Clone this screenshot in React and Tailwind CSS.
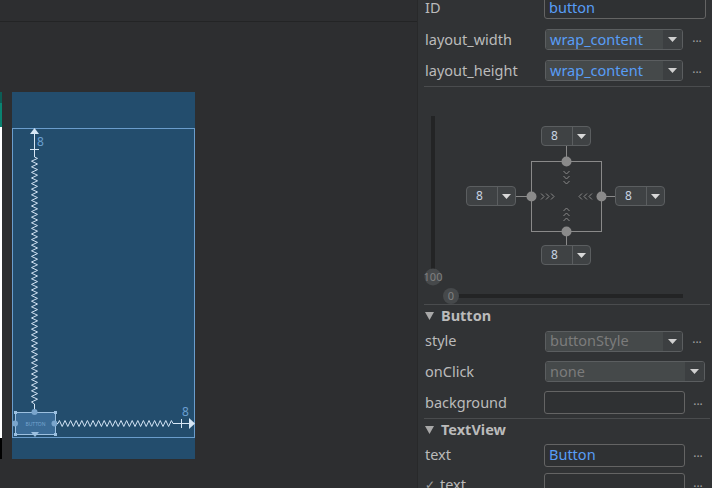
import React from "react";

const zigV = (x, y0, y1, a, step) => {
  let d = `M${x} ${y0}`;
  let s = 1;
  for (let y = y0 + step / 2; y < y1; y += step) {
    d += ` L${x + s * a} ${y}`;
    s = -s;
  }
  d += ` L${x} ${y1}`;
  return d;
};
const zigH = (y, x0, x1, a, step) => {
  let d = `M${x0} ${y}`;
  let s = -1;
  for (let x = x0 + step / 2; x < x1; x += step) {
    d += ` L${x} ${y + s * a}`;
    s = -s;
  }
  d += ` L${x1} ${y}`;
  return d;
};

function Blueprint() {
  return (
    <div className="w-[183px] h-[367px] bg-[#234d6d] shrink-0">
      <svg width="183" height="367" viewBox="0 0 183 367">
        <rect x="0.5" y="36.5" width="182" height="309" fill="none" stroke="#6a9dcc" strokeWidth="1" />
        <polygon points="22.5,36 18,42 27,42" fill="#d6e6f5" />
        <line x1="22.5" y1="42" x2="22.5" y2="65" stroke="#d6e6f5" strokeWidth="1" />
        <line x1="18" y1="57.5" x2="27" y2="57.5" stroke="#d6e6f5" strokeWidth="1" />
        <text x="25" y="54" fontSize="12" fill="#6a9fd0" fontFamily="Noto Sans, sans-serif">8</text>
        <path d={zigV(22.5, 65, 312, 3, 2.8)} fill="none" stroke="#d2e3f4" strokeWidth="1" />
        <line x1="22.5" y1="312" x2="22.5" y2="319" stroke="#d6e6f5" strokeWidth="1" />
        <path d={zigH(331.5, 46, 161, 3, 2.8)} fill="none" stroke="#d2e3f4" strokeWidth="1" />
        <line x1="161" y1="331.5" x2="177" y2="331.5" stroke="#d6e6f5" strokeWidth="1" />
        <line x1="169.5" y1="327" x2="169.5" y2="336" stroke="#d6e6f5" strokeWidth="1" />
        <polygon points="183,331.5 177,326 177,337" fill="#d6e6f5" />
        <text x="170" y="324" fontSize="12" fill="#6a9fd0" fontFamily="Noto Sans, sans-serif">8</text>
        <rect x="3.5" y="320.5" width="40" height="22" fill="#3a6b96" stroke="#9cc0e0" strokeWidth="1" />
        <text x="23.5" y="334" fontSize="5" fill="#76a5d0" textAnchor="middle" fontFamily="Noto Sans, sans-serif">BUTTON</text>
        <rect x="2" y="319" width="3" height="3" fill="#9cc0e0" />
        <rect x="42" y="319" width="3" height="3" fill="#9cc0e0" />
        <rect x="2" y="341" width="3" height="3" fill="#9cc0e0" />
        <rect x="42" y="341" width="3" height="3" fill="#9cc0e0" />
        <circle cx="22.5" cy="320" r="3" fill="#7aa5cc" />
        <circle cx="42.5" cy="331.5" r="3" fill="#7aa5cc" />
        <circle cx="3" cy="331.5" r="3" fill="#7aa5cc" />
        <polygon points="19,340 27,340 23,345" fill="#9cc0e0" />
        <line x1="45" y1="331.5" x2="46" y2="331.5" stroke="#d6e6f5" />
      </svg>
    </div>
  );
}

function Drop8({ className }) {
  return (
    <div className={"absolute w-[50px] h-[20px] rounded-[4px] border border-[#5b5e60] bg-[#3f4244] flex " + className}>
      <div className="w-[30px] flex items-center pl-[9px] text-[12px] text-[#c8d4e2] leading-none">8</div>
      <div className="flex-1 border-l border-[#5b5e60] flex items-center justify-center">
        <svg width="9" height="5" viewBox="0 0 9 5"><polygon points="0,0 9,0 4.5,5" fill="#d8d8d8" /></svg>
      </div>
    </div>
  );
}

function Chev({ x, y, dir }) {
  const c = "#8a8a8a";
  const items = [0, 1, 2];
  return items.map((i) => {
    let pts;
    if (dir === "r") pts = `${x + i * 5},${y - 3} ${x + i * 5 + 3},${y} ${x + i * 5},${y + 3}`;
    if (dir === "l") pts = `${x - i * 5},${y - 3} ${x - i * 5 - 3},${y} ${x - i * 5},${y + 3}`;
    if (dir === "d") pts = `${x - 3},${y + i * 5} ${x},${y + i * 5 + 3} ${x + 3},${y + i * 5}`;
    if (dir === "u") pts = `${x - 3},${y - i * 5} ${x},${y - i * 5 - 3} ${x + 3},${y - i * 5}`;
    return <polyline key={i} points={pts} fill="none" stroke={c} strokeWidth="1" />;
  });
}

function ConstraintWidget() {
  return (
    <div className="relative h-[217px] w-full">
      <svg className="absolute inset-0" width="293" height="217" viewBox="0 0 293 217">
        <rect x="13" y="29" width="4" height="160" fill="#232425" />
        <rect x="33" y="207" width="232" height="4" fill="#232425" />
        <line x1="148.5" y1="59" x2="148.5" y2="74" stroke="#8a8a8a" />
        <line x1="148.5" y1="144" x2="148.5" y2="158" stroke="#8a8a8a" />
        <line x1="98" y1="109.5" x2="113" y2="109.5" stroke="#8a8a8a" />
        <line x1="183" y1="109.5" x2="197" y2="109.5" stroke="#8a8a8a" />
        <rect x="113.5" y="74.5" width="70" height="70" fill="none" stroke="#8a8a8a" />
        <circle cx="148.5" cy="74.5" r="5" fill="#8a8a8a" />
        <circle cx="148.5" cy="144.5" r="5" fill="#8a8a8a" />
        <circle cx="113.5" cy="109.5" r="5" fill="#8a8a8a" />
        <circle cx="183.5" cy="109.5" r="5" fill="#8a8a8a" />
        <Chev x={123} y={109.5} dir="r" />
        <Chev x={174} y={109.5} dir="l" />
        <Chev x={148.5} y={84} dir="d" />
        <Chev x={148.5} y={134} dir="u" />
        <circle cx="15" cy="190" r="8.5" fill="#46494b" />
        <circle cx="33" cy="209" r="8" fill="#46494b" />
        <text x="15" y="194" fontSize="11" fill="#808080" textAnchor="middle" fontFamily="Noto Sans, sans-serif">100</text>
        <text x="33" y="213" fontSize="11" fill="#808080" textAnchor="middle" fontFamily="Noto Sans, sans-serif">0</text>
      </svg>
      <Drop8 className="left-[123px] top-[39px]" />
      <Drop8 className="left-[48px] top-[99px]" />
      <Drop8 className="left-[197px] top-[99px]" />
      <Drop8 className="left-[123px] top-[158px]" />
    </div>
  );
}

const Dots = () => <div className="w-[26px] shrink-0 text-center text-[#a0a0a0] text-[12px] leading-none -mt-[4px]">...</div>;

function Dropdown({ value, w, disabled }) {
  return (
    <div className={"ml-[1px] h-[21px] shrink-0 rounded-[3px] border border-[#5b5e60] flex overflow-hidden " + w}>
      <div className={"flex-1 bg-[#45494a] flex items-center pl-[4px] text-[14.5px] " + (disabled ? "text-[#7c7c7c]" : "text-[#589df6]")}>{value}</div>
      <div className="w-[19px] bg-[#3c3f41] flex items-center justify-center">
        <svg width="9" height="5" viewBox="0 0 9 5"><polygon points="0,0 9,0 4.5,5" fill="#d0d0d0" /></svg>
      </div>
    </div>
  );
}

function Row({ label, h, children }) {
  return (
    <div className={"flex items-center " + h}>
      <div className="w-[120px] shrink-0 pl-[1px] text-[14.5px] text-[#bbbbbb]">{label}</div>
      {children}
    </div>
  );
}

function Input({ value, w = "w-[141px]", h = "h-[23px]" }) {
  return (
    <div className={"shrink-0 rounded-[3px] border border-[#646464] bg-[#2f3133] flex items-center pl-[4px] text-[14.5px] text-[#589df6] " + w + " " + h}>{value}</div>
  );
}

function Header({ title, h }) {
  return (
    <div className={"flex items-center gap-[7px] pl-[1px] " + h}>
      <svg width="9" height="8" viewBox="0 0 9 8"><polygon points="0,0 9,0 4.5,8" fill="#a8a8a8" /></svg>
      <span className="text-[14.5px] font-bold text-[#bbbbbb]">{title}</span>
    </div>
  );
}

export default function App() {
  return (
    <div className="w-[712px] h-[488px] flex overflow-hidden bg-[#2e2f31]" style={{ fontFamily: '"Noto Sans", "Open Sans", sans-serif' }}>
      <div className="w-[418px] shrink-0 flex flex-col bg-[#2d2e30] border-r border-[#28292a]">
        <div className="h-[22px] border-b border-[#232425] shrink-0" />
        <div className="flex pt-[70px]">
          <div className="w-[2px] flex flex-col">
            <div className="h-[11px] bg-[#0c5c55]" />
            <div className="h-[24px] bg-[#0a8371]" />
            <div className="h-[311px] bg-white" />
            <div className="h-[21px] bg-black" />
          </div>
          <div className="ml-[10px]">
            <Blueprint />
          </div>
        </div>
      </div>
      <div className="flex-1 bg-[#313335] pl-[6px] overflow-hidden">
        <div className="-mt-[8px]">
          <Row label="ID" h="h-[32px]">
            <Input value="button" w="w-[162px]" h="h-[22px]" />
          </Row>
          <Row label="layout_width" h="h-[31px]">
            <Dropdown value="wrap_content" w="w-[138px]" />
            <div className="w-[1px] shrink-0" />
            <Dots />
          </Row>
          <Row label="layout_height" h="h-[31px]">
            <Dropdown value="wrap_content" w="w-[138px]" />
            <div className="w-[1px] shrink-0" />
            <Dots />
          </Row>
        </div>
        <div className="h-[1px] bg-[#4a4c4e] mr-[2px]" />
        <div className="-ml-[6px]">
          <ConstraintWidget />
        </div>
        <div className="h-[1px] bg-[#4a4c4e] mr-[2px]" />
        <Header title="Button" h="h-[21px]" />
        <Row label="style" h="h-[30px]">
          <Dropdown value="buttonStyle" w="w-[138px]" disabled />
          <div className="w-[1px] shrink-0" />
          <Dots />
        </Row>
        <Row label="onClick" h="h-[31px]">
          <Dropdown value="none" w="w-[160px]" disabled />
        </Row>
        <Row label="background" h="h-[31px]">
          <Input value="" />
          <Dots />
        </Row>
        <div className="h-[1px] bg-[#4a4c4e] mr-[2px]" />
        <Header title="TextView" h="h-[22px]" />
        <Row label="text" h="h-[28px]">
          <Input value="Button" />
          <Dots />
        </Row>
        <Row label={<span className="flex items-center gap-[5px]"><span className="text-[#a0a0a0] text-[12px]">✓</span>text</span>} h="h-[31px]">
          <Input value="" />
          <Dots />
        </Row>
      </div>
    </div>
  );
}
